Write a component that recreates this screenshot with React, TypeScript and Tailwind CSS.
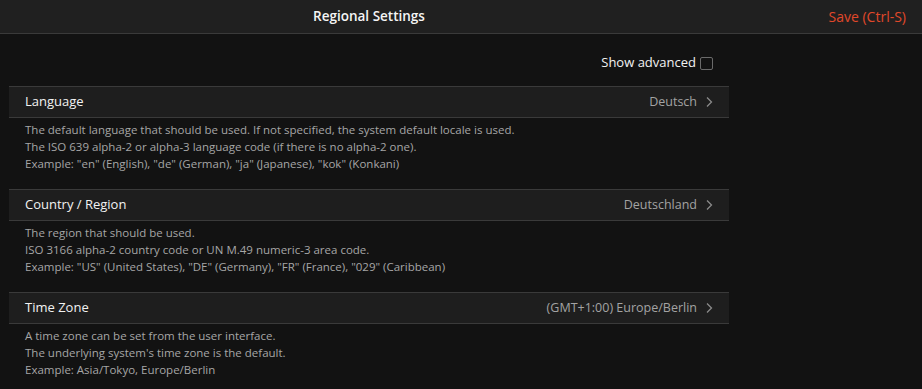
const sections = [
  {
    label: "Language",
    value: "Deutsch",
    lines: [
      "The default language that should be used. If not specified, the system default locale is used.",
      "The ISO 639 alpha-2 or alpha-3 language code (if there is no alpha-2 one).",
      'Example: "en" (English), "de" (German), "ja" (Japanese), "kok" (Konkani)',
    ],
  },
  {
    label: "Country / Region",
    value: "Deutschland",
    lines: [
      "The region that should be used.",
      "ISO 3166 alpha-2 country code or UN M.49 numeric-3 area code.",
      'Example: "US" (United States), "DE" (Germany), "FR" (France), "029" (Caribbean)',
    ],
  },
  {
    label: "Time Zone",
    value: "(GMT+1:00) Europe/Berlin",
    lines: [
      "A time zone can be set from the user interface.",
      "The underlying system's time zone is the default.",
      "Example: Asia/Tokyo, Europe/Berlin",
    ],
  },
];

function Chevron() {
  return (
    <svg width="8" height="12" viewBox="0 0 8 12" className="ml-[8px] text-[#8a8a8a]">
      <polyline points="2,1.5 6.5,6 2,10.5" fill="none" stroke="currentColor" strokeWidth="1.3" />
    </svg>
  );
}

function SettingSection({ label, value, lines }: { label: string; value: string; lines: string[] }) {
  return (
    <div>
      <div className="flex h-[32px] items-center justify-between border-y border-[#3a3a3a] bg-[#1e1e1e] pl-4 pr-4">
        <span className="text-[13px] text-[#f2f2f2]">{label}</span>
        <span className="flex items-center text-[12.5px] text-[#a3a3a3]">
          {value}
          <Chevron />
        </span>
      </div>
      <div className="px-4 pb-[17px] pt-[3px] text-[11.5px] leading-[17px] text-[#a6a6a6]">
        {lines.map((l) => (
          <div key={l}>{l}</div>
        ))}
      </div>
    </div>
  );
}

export default function App() {
  return (
    <div
      className="h-[389px] w-[922px] overflow-hidden bg-[#121212]"
      style={{ fontFamily: '"Segoe UI", "Open Sans", "Noto Sans", sans-serif' }}
    >
      <div className="flex h-[34px] items-center border-b border-[#3a3a3a] bg-[#202020]">
        <div className="w-[738px] text-center text-[13.5px] font-semibold text-[#f5f5f5]">
          Regional Settings
        </div>
        <div className="ml-auto pr-4 text-[14px] text-[#e0482a]">Save (Ctrl-S)</div>
      </div>
      <div className="ml-[9px] w-[720px]">
        <div className="mt-[20px] mb-[14px] flex h-[18px] items-center justify-end gap-[4px] pr-[16px]">
          <span className="text-[13px] text-[#f2f2f2]">Show advanced</span>
          <span className="h-[13px] w-[13px] rounded-[2px] border border-[#6a6a6a]" />
        </div>
        {sections.map((s) => (
          <SettingSection key={s.label} {...s} />
        ))}
      </div>
    </div>
  );
}
